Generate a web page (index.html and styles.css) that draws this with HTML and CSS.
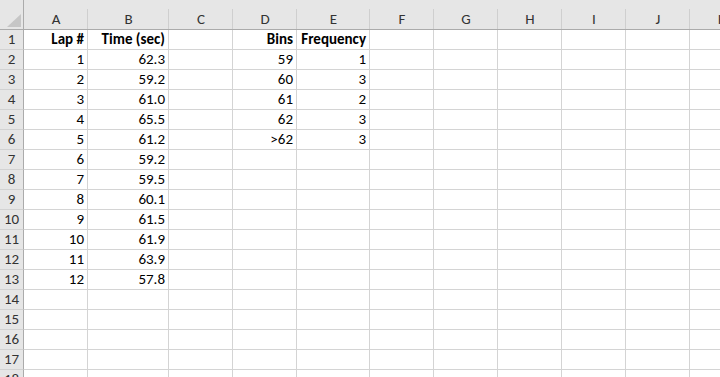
FILE: index.html
```html
<!DOCTYPE html>
<html>
<head>
<meta charset="utf-8">
<link rel="stylesheet" href="styles.css">
</head>
<body>
<div class="sheet">
  <div class="corner"><svg class="tri" width="15" height="14" viewBox="0 0 15 14"><polygon points="14,0 14,13 0,13" fill="#c6c6c6"/></svg></div>
  <div class="ch">A</div><div class="ch">B</div><div class="ch">C</div><div class="ch">D</div><div class="ch">E</div><div class="ch">F</div><div class="ch">G</div><div class="ch">H</div><div class="ch">I</div><div class="ch">J</div><div class="ch">K</div>

  <div class="rh">1</div><div class="c b">Lap #</div><div class="c b">Time (sec)</div><div class="c"></div><div class="c b">Bins</div><div class="c b">Frequency</div><div class="c"></div><div class="c"></div><div class="c"></div><div class="c"></div><div class="c"></div><div class="c"></div>
  <div class="rh">2</div><div class="c">1</div><div class="c">62.3</div><div class="c"></div><div class="c">59</div><div class="c">1</div><div class="c"></div><div class="c"></div><div class="c"></div><div class="c"></div><div class="c"></div><div class="c"></div>
  <div class="rh">3</div><div class="c">2</div><div class="c">59.2</div><div class="c"></div><div class="c">60</div><div class="c">3</div><div class="c"></div><div class="c"></div><div class="c"></div><div class="c"></div><div class="c"></div><div class="c"></div>
  <div class="rh">4</div><div class="c">3</div><div class="c">61.0</div><div class="c"></div><div class="c">61</div><div class="c">2</div><div class="c"></div><div class="c"></div><div class="c"></div><div class="c"></div><div class="c"></div><div class="c"></div>
  <div class="rh">5</div><div class="c">4</div><div class="c">65.5</div><div class="c"></div><div class="c">62</div><div class="c">3</div><div class="c"></div><div class="c"></div><div class="c"></div><div class="c"></div><div class="c"></div><div class="c"></div>
  <div class="rh">6</div><div class="c">5</div><div class="c">61.2</div><div class="c"></div><div class="c">&gt;62</div><div class="c">3</div><div class="c"></div><div class="c"></div><div class="c"></div><div class="c"></div><div class="c"></div><div class="c"></div>
  <div class="rh">7</div><div class="c">6</div><div class="c">59.2</div><div class="c"></div><div class="c"></div><div class="c"></div><div class="c"></div><div class="c"></div><div class="c"></div><div class="c"></div><div class="c"></div><div class="c"></div>
  <div class="rh">8</div><div class="c">7</div><div class="c">59.5</div><div class="c"></div><div class="c"></div><div class="c"></div><div class="c"></div><div class="c"></div><div class="c"></div><div class="c"></div><div class="c"></div><div class="c"></div>
  <div class="rh">9</div><div class="c">8</div><div class="c">60.1</div><div class="c"></div><div class="c"></div><div class="c"></div><div class="c"></div><div class="c"></div><div class="c"></div><div class="c"></div><div class="c"></div><div class="c"></div>
  <div class="rh">10</div><div class="c">9</div><div class="c">61.5</div><div class="c"></div><div class="c"></div><div class="c"></div><div class="c"></div><div class="c"></div><div class="c"></div><div class="c"></div><div class="c"></div><div class="c"></div>
  <div class="rh">11</div><div class="c">10</div><div class="c">61.9</div><div class="c"></div><div class="c"></div><div class="c"></div><div class="c"></div><div class="c"></div><div class="c"></div><div class="c"></div><div class="c"></div><div class="c"></div>
  <div class="rh">12</div><div class="c">11</div><div class="c">63.9</div><div class="c"></div><div class="c"></div><div class="c"></div><div class="c"></div><div class="c"></div><div class="c"></div><div class="c"></div><div class="c"></div><div class="c"></div>
  <div class="rh">13</div><div class="c">12</div><div class="c">57.8</div><div class="c"></div><div class="c"></div><div class="c"></div><div class="c"></div><div class="c"></div><div class="c"></div><div class="c"></div><div class="c"></div><div class="c"></div>
  <div class="rh">14</div><div class="c"></div><div class="c"></div><div class="c"></div><div class="c"></div><div class="c"></div><div class="c"></div><div class="c"></div><div class="c"></div><div class="c"></div><div class="c"></div><div class="c"></div>
  <div class="rh">15</div><div class="c"></div><div class="c"></div><div class="c"></div><div class="c"></div><div class="c"></div><div class="c"></div><div class="c"></div><div class="c"></div><div class="c"></div><div class="c"></div><div class="c"></div>
  <div class="rh">16</div><div class="c"></div><div class="c"></div><div class="c"></div><div class="c"></div><div class="c"></div><div class="c"></div><div class="c"></div><div class="c"></div><div class="c"></div><div class="c"></div><div class="c"></div>
  <div class="rh">17</div><div class="c"></div><div class="c"></div><div class="c"></div><div class="c"></div><div class="c"></div><div class="c"></div><div class="c"></div><div class="c"></div><div class="c"></div><div class="c"></div><div class="c"></div>
  <div class="rh">18</div><div class="c"></div><div class="c"></div><div class="c"></div><div class="c"></div><div class="c"></div><div class="c"></div><div class="c"></div><div class="c"></div><div class="c"></div><div class="c"></div><div class="c"></div>
</div>
</body>
</html>
```

FILE: styles.css
```css
html, body {
  margin: 0;
  padding: 0;
  background: #ffffff;
  overflow: hidden;
}

.sheet {
  display: grid;
  grid-template-columns: 24px 64px 81px 64px 64px 73px 64px 64px 64px 64px 64px 64px;
  grid-template-rows: 30px repeat(18, 20px);
  width: 753px;
  font-family: Carlito, Lato, "Liberation Sans", sans-serif;
  color: #000;
}

.corner {
  background: #e6e6e6;
  border-right: 1px solid #ababab;
  border-bottom: 1px solid #ababab;
  box-sizing: border-box;
  display: flex;
  align-items: flex-end;
  justify-content: flex-end;
  padding: 0 1px 1px 0;
}

.tri {
  display: block;
}

.ch {
  position: relative;
  background: #e6e6e6;
  border-bottom: 1px solid #ababab;
  box-sizing: border-box;
  text-align: center;
  font-size: 15px;
  line-height: 16px;
  padding-top: 11px;
  color: #333;
}

.ch::after {
  content: "";
  position: absolute;
  right: 0;
  top: 9px;
  bottom: 0;
  width: 1px;
  background: #cfcfcf;
}

.rh {
  background: #e6e6e6;
  border-right: 1px solid #ababab;
  border-bottom: 1px solid #d2d2d2;
  box-sizing: border-box;
  text-align: center;
  font-size: 15px;
  line-height: 19px;
  color: #333;
}

.c {
  border-right: 1px solid #d4d4d4;
  border-bottom: 1px solid #d4d4d4;
  box-sizing: border-box;
  text-align: right;
  padding-right: 3px;
  font-size: 15px;
  line-height: 19px;
  white-space: nowrap;
  overflow: hidden;
}

.b {
  font-weight: bold;
}
```
